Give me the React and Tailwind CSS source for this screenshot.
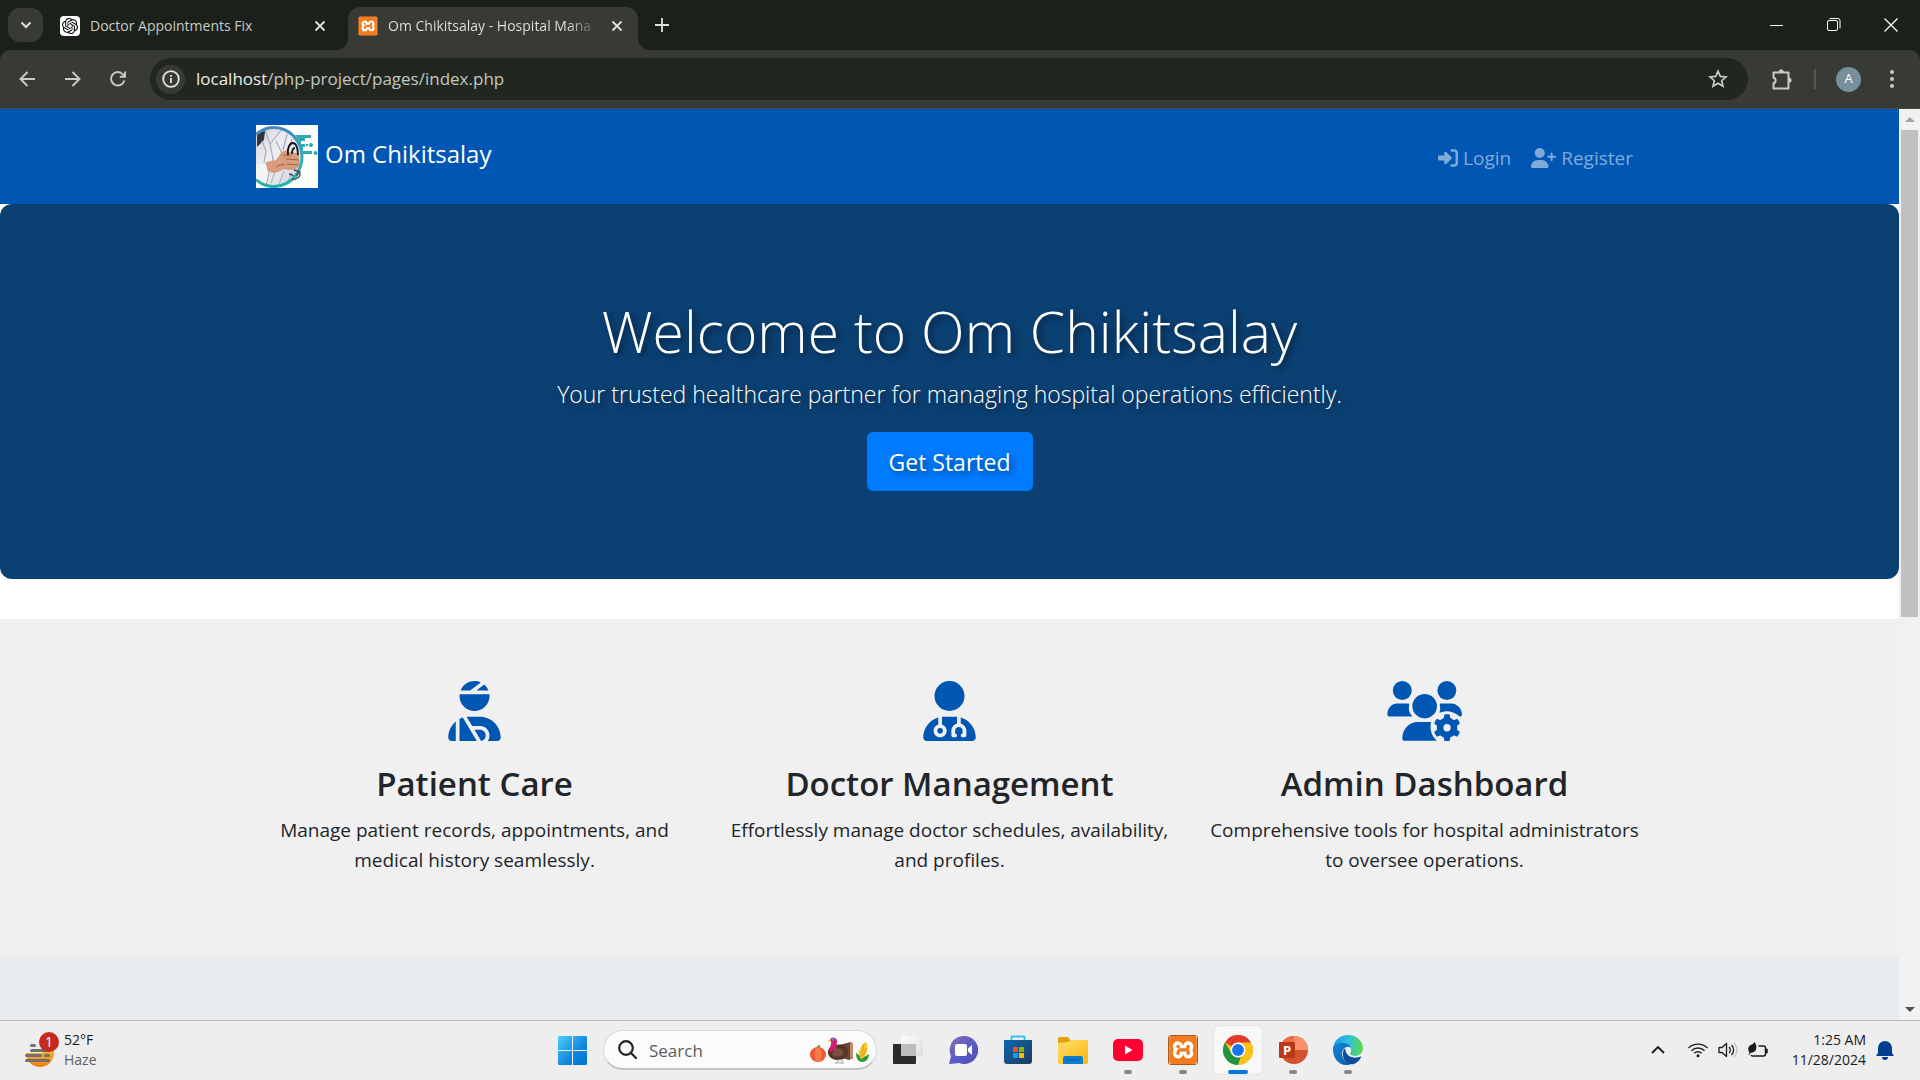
import React from "react";
import { FaUserInjured, FaUserDoctor, FaRightToBracket, FaUserPlus } from "react-icons/fa6";
import { SiOpenai, SiXampp } from "react-icons/si";

function BrandLogo() {
  return (
    <svg viewBox="0 0 62 63" className="h-[63px] w-[62px] shrink-0" aria-hidden="true">
      <defs>
        <linearGradient id="ring" x1="0" y1="0" x2="0" y2="1">
          <stop offset="0" stopColor="#4287c4" />
          <stop offset="0.6" stopColor="#2fb0b8" />
          <stop offset="1" stopColor="#22b2a4" />
        </linearGradient>
        <clipPath id="ringClip"><ellipse cx="18" cy="31.500" rx="27" ry="29" /></clipPath>
        <linearGradient id="coat" x1="0" y1="0" x2="1" y2="1">
          <stop offset="0" stopColor="#cfd1d8" />
          <stop offset="0.400" stopColor="#eeeef2" />
          <stop offset="0.700" stopColor="#e2e3e9" />
          <stop offset="1" stopColor="#c4c7d0" />
        </linearGradient>
      </defs>
      <rect width="62" height="63" fill="#fff" />
      <g clipPath="url(#ringClip)">
        <path d="M3 3h27l12 12 4 17-6 27-26 3L0 60V9z" fill="url(#coat)" />
        <path d="M3 3l6 3-1 9-7 7V10z" fill="#33353c" />
        <path d="M9 5l5 14 3 15-2 5M14 19L26 4M6 16l4 10-3 18M20 16l6 12M31 9l-4 16M36 14l-3 10" fill="none" stroke="#a9adb9" strokeWidth="1.200" />
        <path d="M19 46l-4 12M28 46l-5 13M36 48l-5 10" fill="none" stroke="#b4b8c3" strokeWidth="1.200" />
        <path d="M0 40l10-2 3 10-3 14H0z" fill="#f4f4f7" />
        <path d="M10 38l3 10-3 13" fill="none" stroke="#9ea3af" />
      </g>
      <path d="M0 9.500A28 30 0 0 1 46 31.500 28 30 0 0 1 0 54.500" fill="none" stroke="url(#ring)" strokeWidth="3" />
      <path d="M10 37l10-2 5-7c3-3 6-3 8-1l8 1c3 2 2 4 2 6 1 2 1 4 0 6-1 4-4 5-8 5-4 0-6-1-9 0-5 3-9 4-14 1z" fill="#d79d7d" />
      <path d="M27 30l8 1M30 34l13 1M31 39l12 1M20 42c3-2 6-3 9-2" stroke="#a2644a" strokeWidth="1" fill="none" />
      <path d="M32 30c-1-8 2-12 5-12s5 5 5 12M36 29c0-4 1-6 3-6" stroke="#16181c" strokeWidth="1.800" fill="none" />
      <path d="M38 45c4 1 7 2 6 5s-5 4-8 4M33 49c3 0 6 3 7 6M44 46l-6 8" stroke="#3c4248" strokeWidth="1.300" fill="none" />
      <circle cx="39" cy="52" r="2" fill="#26b8b0" />
      <path d="M39 10h16v3h-6v3h-4v3h4v3h-2v4h9v3h-9c-1-8-4-14-8-19z" fill="#2ea9b4" />
      <circle cx="55" cy="20" r="2" fill="#2ea9b4" /><circle cx="59.500" cy="28" r="2" fill="#2ea9b4" />
      <circle cx="51" cy="20" r="1.300" fill="#2ea9b4" />
    </svg>
  );
}

const line = { fill: "none", stroke: "currentColor", strokeLinecap: "round", strokeLinejoin: "round" };

function CloseIcon() {
  return (
    <svg viewBox="0 0 12 12" className="size-3" aria-hidden="true">
      <path d="M1.500 1.500l9 9M10.500 1.500l-9 9" fill="none" stroke="currentColor" strokeWidth="1.800" />
    </svg>
  );
}

function TabStrip() {
  return (
    <header className="flex h-[50px] items-end bg-[#1c201b] text-[#dfe1dc]">
      <button aria-label="Search tabs" className="mb-2 ml-2 flex h-[34px] w-[35px] items-center justify-center rounded-xl bg-[#383b35]">
        <svg viewBox="0 0 12 8" className="h-2 w-3"><path d="M1.500 1.500L6 6l4.500-4.500" fill="none" stroke="currentColor" strokeWidth="2" /></svg>
      </button>
      <div className="ml-[5px] flex h-[43px] w-[300px] items-center pr-[22px] pb-1.5 pl-3 text-sm">
        <span className="flex size-5 shrink-0 items-center justify-center rounded bg-white text-black"><SiOpenai className="size-4" /></span>
        <span className="ml-2.5 flex-1 truncate text-[#c9ccc4]">Doctor Appointments Fix</span>
        <button aria-label="Close tab" className="flex size-3 text-[#dfe1dc]"><CloseIcon /></button>
      </div>
      <div className="relative flex h-[43px] w-[290px] items-center rounded-t-xl bg-[#383b35] pr-[15px] pb-1.5 pl-2.5 text-sm">
        <svg viewBox="0 0 12 12" className="absolute bottom-0 -left-3 size-3"><path d="M12 0v12H0A12 12 0 0 0 12 0z" fill="#383b35" /></svg>
        <svg viewBox="0 0 12 12" className="absolute -right-3 bottom-0 size-3"><path d="M0 0v12h12A12 12 0 0 1 0 0z" fill="#383b35" /></svg>
        <XamppIcon className="size-5" />
        <span className="ml-2.5 flex-1 overflow-hidden bg-linear-to-r from-[#e3e5df] from-85% to-[#383b35] bg-clip-text whitespace-nowrap text-transparent">Om Chikitsalay - Hospital Mana</span>
        <button aria-label="Close tab" className="ml-3 flex size-3"><CloseIcon /></button>
      </div>
      <button aria-label="New tab" className="mb-[18px] ml-[17px]">
        <svg viewBox="0 0 14 14" className="size-3.5"><path d="M7 0v14M0 7h14" fill="none" stroke="currentColor" strokeWidth="1.800" /></svg>
      </button>
      <div className="ml-auto flex h-full items-center gap-[43px] pr-[22px] text-white">
        <button aria-label="Minimize"><svg viewBox="0 0 14 14" className="size-3.5"><path d="M0 7.500h13" stroke="currentColor" /></svg></button>
        <button aria-label="Restore">
          <svg viewBox="0 0 14 14" className="size-3.5" {...line}><rect x="0.500" y="2.500" width="10" height="10" rx="1.500" /><path d="M3 0.500h8a2 2 0 0 1 2 2V10" /></svg>
        </button>
        <button aria-label="Close window"><svg viewBox="0 0 14 14" className="size-3.5"><path d="M0.500 0.500l13 13M13.500 0.500l-13 13" stroke="currentColor" strokeWidth="1.200" /></svg></button>
      </div>
    </header>
  );
}

function Toolbar() {
  return (
    <div className="bg-[#1c201b]">
      <div className="flex h-[59px] items-center rounded-t-[10px] border-b border-[#4b4e48] bg-[#383b35] pr-[26px] pl-[19px] text-[#c9ccc2]">
        <button aria-label="Back"><svg viewBox="0 0 16 16" className="size-4" fill="none" stroke="currentColor" strokeWidth="1.900"><path d="M16 8H2M8.500 1L1.500 8l7 7" /></svg></button>
        <button aria-label="Forward" className="ml-[30px]"><svg viewBox="0 0 16 16" className="size-4" fill="none" stroke="currentColor" strokeWidth="1.900"><path d="M0 8h14M7.500 1l7 7-7 7" /></svg></button>
        <button aria-label="Reload" className="ml-[29px]">
          <svg viewBox="0 0 16 16" className="size-4" fill="none" stroke="currentColor" strokeWidth="1.900"><path d="M14.300 9.500A6.700 6.700 0 1 1 13 3.500L15 5.500M15 0.500v5.200H9.800" /></svg>
        </button>
        <div className="ml-6 flex h-[42px] flex-1 items-center rounded-full bg-[#222620] pr-5 pl-1.5">
          <button aria-label="Site information" className="flex size-[29px] items-center justify-center rounded-full bg-[#383b35]">
            <svg viewBox="0 0 18 18" className="size-[18px]" fill="none" stroke="#e3e5df" strokeWidth="1.800"><circle cx="9" cy="9" r="7.800" /><path d="M9 8v5M9 5v1.800" /></svg>
          </button>
          <label htmlFor="address" className="ml-[11px] text-[17px] leading-7 text-[#eceee8]">localhost</label>
          <input id="address" defaultValue="/php-project/pages/index.php" className="h-7 min-w-0 flex-1 bg-transparent text-[17px] leading-7 text-[#c3c6bd] outline-none" />
          <button aria-label="Bookmark this page">
            <svg viewBox="0 0 20 20" className="size-5" fill="none" stroke="currentColor" strokeWidth="1.700"><path d="M10 2.200l2.300 5.200 5.700.5-4.300 3.800 1.300 5.600-5-3-5 3 1.300-5.600L2 7.900l5.700-.5z" /></svg>
          </button>
        </div>
        <button aria-label="Extensions" className="ml-[23px]">
          <svg viewBox="0 0 22 22" className="size-[22px]" fill="none" stroke="currentColor" strokeWidth="2" strokeLinejoin="round">
            <path d="M2.500 4.500h15v16h-15v-5.200a2.900 2.900 0 0 0 0-5.600z" />
            <path d="M8 4a2.200 2.200 0 0 1 4.400 0zM18 10a2.200 2.200 0 0 1 0 4.400z" fill="currentColor" strokeWidth="1" />
          </svg>
        </button>
        <span className="ml-[21px] h-5 w-0.5 bg-[#54584f]" />
        <button aria-label="Profile" className="ml-5 flex size-[25px] items-center justify-center rounded-full bg-[#78909c] text-[13px] text-white">A</button>
        <button aria-label="Menu" className="ml-[29px]"><svg viewBox="0 0 4 18" className="h-[18px] w-1" fill="currentColor"><circle cx="2" cy="2" r="2" /><circle cx="2" cy="9" r="2" /><circle cx="2" cy="16" r="2" /></svg></button>
      </div>
    </div>
  );
}

function TeamGearIcon({ className }) {
  return (
    <svg viewBox="590 64 226 181" className={className} fill="currentColor" aria-hidden="true">
      <circle cx="636" cy="92.500" r="28.500" />
      <circle cx="770.500" cy="92.500" r="28.500" />
      <circle cx="703.500" cy="140" r="37" />
      <path d="M621 132h33c2 0 3 1 3 3-3 14 0 27 10 36h-70c-4 0-6-2-6-6 0-18 12-33 30-33z" />
      <path d="M752 132h31c18 0 33 15 33 33 0 3-1 5-3 6-3 1-5 0-7-2-17-14-36-18-58-9 3-8 3-16 1-25 0-2 1-3 3-3z" />
      <path d="M684 188h39c-5 19 0 41 17 56h-98c-4 0-6-3-6-6 0-28 20-50 48-50z" />
      <circle cx="771" cy="205" r="21" fill="none" stroke="currentColor" strokeWidth="20" />
      {[0, 60, 120, 180, 240, 300].map((angle) => (
        <path key={angle} d="M763 165q8-2 16 0l2 13h-20z" transform={`rotate(${angle} 771 205)`} />
      ))}
    </svg>
  );
}

const features = [
  { Icon: FaUserInjured, iconClass: "h-[60px] w-[53px]", title: "Patient Care", text: "Manage patient records, appointments, and medical history seamlessly." },
  { Icon: FaUserDoctor, iconClass: "h-[60px] w-[53px]", title: "Doctor Management", text: "Effortlessly manage doctor schedules, availability, and profiles." },
  { Icon: TeamGearIcon, iconClass: "h-[60px] w-[75px]", title: "Admin Dashboard", text: "Comprehensive tools for hospital administrators to oversee operations." },
];

function Site() {
  return (
    <main className="flex min-w-0 flex-1 flex-col overflow-hidden bg-white text-[#212529]">
      <nav className="bg-[#0056b3] py-4">
        <div className="mx-auto flex max-w-[1425px] items-center justify-between px-[19px]">
          <a href="#home" className="flex items-center gap-[7px] text-2xl leading-9 text-white">
            <BrandLogo />
            <span className="pb-1.5">Om Chikitsalay</span>
          </a>
          <div className="flex gap-5 px-2.5 pt-0.5 text-[19px] leading-[30px] text-[#80abd9]">
            <a href="#login" className="flex items-center gap-[5px]"><FaRightToBracket className="size-5" />Login</a>
            <a href="#register" className="flex items-center gap-[5px]"><FaUserPlus className="h-5 w-[25px]" />Register</a>
          </div>
        </div>
      </nav>
      <section className="flex flex-col items-center rounded-xl bg-[#0b4073] px-5 pt-[91px] pb-[88px] text-center text-white text-shadow-[3px_3px_6px_rgba(0,0,0,0.5)]">
        <h1 className="text-[57px] leading-[72px] font-light">Welcome to Om Chikitsalay</h1>
        <p className="mt-2.5 mb-5 text-[23px] leading-[35px] font-light">Your trusted healthcare partner for managing hospital operations efficiently.</p>
        <button className="h-[59px] rounded-md bg-[#007bff] px-[22px] pt-0.5 text-[23px] text-shadow-[3px_3px_6px_rgba(0,0,0,0.5)]">Get Started</button>
      </section>
      <section className="mt-10 bg-[#f0f0f0] pt-[62px] pb-[75px]">
        <div className="mx-auto grid max-w-[1425px] grid-cols-3">
          {features.map(({ Icon, iconClass, title, text }) => (
            <article key={title} className="flex flex-col items-center px-3 text-center">
              <Icon className={`${iconClass} text-[#0056b3]`} />
              <h3 className="mt-[22px] text-[33px] leading-[42px] font-semibold">{title}</h3>
              <p className="mt-2.5 mb-[7px] text-[19px] leading-[30px]">{text}</p>
            </article>
          ))}
        </div>
      </section>
      <footer className="flex-1 bg-[#e8ecef]" />
    </main>
  );
}

function Scrollbar() {
  return (
    <div aria-hidden="true" className="flex w-[21px] shrink-0 flex-col items-center bg-[#f1f1f1]">
      <span className="flex h-[21px] items-center"><svg viewBox="0 0 10 5" className="h-[5px] w-2.5"><path d="M0 5l5-5 5 5z" fill="#a3a3a3" /></svg></span>
      <div className="w-full flex-1 px-0.5"><div className="h-[56%] bg-[#c1c1c1]" /></div>
      <span className="flex h-[21px] items-center"><svg viewBox="0 0 10 5" className="h-[5px] w-2.5"><path d="M0 0l5 5 5-5z" fill="#505050" /></svg></span>
    </div>
  );
}

function XamppIcon({ className }) {
  return (
    <span className={`${className} flex shrink-0 overflow-hidden rounded-[3px] border border-[#a8571f] bg-white text-[#f47b20]`}>
      <SiXampp className="size-full" />
    </span>
  );
}

function WindowsIcon() {
  return (
    <svg viewBox="0 0 29 29" className="size-[29px]">
      <defs><linearGradient id="win" x1="0" y1="0" x2="1" y2="1"><stop offset="0" stopColor="#4cd0ff" /><stop offset="0.600" stopColor="#0f86dc" /><stop offset="1" stopColor="#0072cf" /></linearGradient></defs>
      <path d="M1 0h13v14H0V1zM15 0h13l1 1v13H15zM0 15h14v14H1l-1-1zM15 15h14v13l-1 1H15z" fill="url(#win)" />
    </svg>
  );
}

function TaskViewIcon() {
  return (
    <svg viewBox="0 0 30 28" className="h-7 w-[30px]">
      <defs><linearGradient id="tv" x1="0" y1="0" x2="1" y2="1"><stop offset="0" stopColor="#fff" /><stop offset="1" stopColor="#dcdcdc" /></linearGradient></defs>
      <rect y="8" width="23" height="20" rx="1" fill="#2b2b29" />
      <rect x="8" width="22" height="20" rx="1" fill="url(#tv)" />
      <path d="M8 8h15v12H8z" fill="#bdbdbd" />
    </svg>
  );
}

function ChatIcon() {
  return (
    <svg viewBox="0 0 29 28" className="h-7 w-[29px]">
      <defs><linearGradient id="chat" x1="0" y1="0" x2="1" y2="1"><stop offset="0" stopColor="#8d6bb3" /><stop offset="0.500" stopColor="#5a5fc7" /><stop offset="1" stopColor="#4c4bb8" /></linearGradient></defs>
      <path d="M15 0a14 14 0 1 1-5 27l-9 1c-1 0-1-1-.7-1.500L2 20A14 14 0 0 1 15 0z" fill="url(#chat)" />
      <rect x="6" y="8" width="12" height="12" rx="2" fill="#fff" /><path d="M19 12.500l4-3.500v10l-4-3.500z" fill="#fff" />
    </svg>
  );
}

function StoreIcon() {
  return (
    <svg viewBox="0 0 30 30" className="size-[30px]">
      <defs><linearGradient id="store" x1="0" y1="0" x2="1" y2="1"><stop offset="0" stopColor="#0a67b0" /><stop offset="1" stopColor="#243a5e" /></linearGradient></defs>
      <path d="M8.500 6V1.500h13V6" fill="none" stroke="#35c1f1" strokeWidth="1.800" strokeLinejoin="round" />
      <path d="M1 5h28v21a3 3 0 0 1-3 3H4a3 3 0 0 1-3-3z" fill="url(#store)" />
      <path d="M10 12h5v5h-5z" fill="#f25022" /><path d="M16 12h5v5h-5z" fill="#7fba00" /><path d="M10 18h5v5h-5z" fill="#00a4ef" /><path d="M16 18h5v5h-5z" fill="#ffb900" />
    </svg>
  );
}

function FolderIcon() {
  return (
    <svg viewBox="0 0 30 27" className="h-[27px] w-[30px]">
      <defs><linearGradient id="folder" x1="0" y1="0" x2="1" y2="1"><stop offset="0" stopColor="#ffdc6b" /><stop offset="1" stopColor="#fbb90f" /></linearGradient></defs>
      <path d="M1 0h9l3 4v6H0V1z" fill="#dfa10c" />
      <path d="M10 5l3-2h16l1 1v22l-1 1H1l-1-1V6z" fill="url(#folder)" />
      <path d="M5 27v-6a2 2 0 0 1 2-2h16a2 2 0 0 1 2 2v6z" fill="#0f7bd0" /><path d="M9 23h12" stroke="#0a4f93" />
    </svg>
  );
}

function YouTubeIcon() {
  return <svg viewBox="0 0 30 22" className="h-[22px] w-[30px]"><rect width="30" height="22" rx="5" fill="#ff0033" /><path d="M12 6.500v9l7.500-4.500z" fill="#fff" /></svg>;
}

function ChromeIcon() {
  return (
    <svg viewBox="0 0 48 48" className="size-[30px]">
      <circle cx="24" cy="24" r="24" fill="#fbc116" />
      <path d="M24 24L3.200 12A24 24 0 0 1 44.800 12z" fill="#e33b2e" />
      <path d="M24 12h20.800A24 24 0 0 1 24 48l10.400-18z" fill="#fbc116" />
      <path d="M3.200 12L13.600 30 24 36l5-1L24 48A24 24 0 0 1 3.200 12z" fill="#229342" />
      <path d="M29 34.500L24 48l10.400-18z" fill="#fbc116" />
      <circle cx="24" cy="24" r="12" fill="#fff" /><circle cx="24" cy="24" r="9.500" fill="#1a73e8" />
    </svg>
  );
}

function PowerPointIcon() {
  return (
    <svg viewBox="0 0 30 30" className="size-[30px]">
      <circle cx="16" cy="15" r="14" fill="#d35230" /><path d="M16 1a14 14 0 0 1 14 14H16z" fill="#ff8f6b" /><path d="M2 15A14 14 0 0 1 16 1v14z" fill="#ed6c47" />
      <rect x="1" y="7" width="16" height="16" rx="1" fill="#b7381b" />
      <text x="9" y="20" textAnchor="middle" fontSize="13" fontWeight="700" fill="#fff">P</text>
    </svg>
  );
}

function EdgeIcon() {
  return (
    <svg viewBox="0 0 30 30" className="size-[30px]">
      <defs>
        <linearGradient id="edgeTop" x1="0" y1="0.300" x2="1" y2="0.400"><stop offset="0" stopColor="#1b9de2" /><stop offset="0.500" stopColor="#2fc0e0" /><stop offset="1" stopColor="#5fd84b" /></linearGradient>
        <linearGradient id="edgeLow" x1="0" y1="0" x2="1" y2="1"><stop offset="0" stopColor="#1488d8" /><stop offset="1" stopColor="#0a5bab" /></linearGradient>
      </defs>
      <path d="M0 15C0 6 7 0 15 0c9 0 15 6.500 15 13 0 5-4 8-8 8-3 0-5-1-5-2s1-2 1-4c0-3-3-5-6-5C6 10 1 13 0 15z" fill="url(#edgeTop)" />
      <path d="M0 15c0-4 4-8 10-7 4 0 7 2 8 5-3-3-9 0-9 6 0 5 4 9 9 10-9 4-18-4-18-14z" fill="url(#edgeLow)" />
      <path d="M12.500 13C9 15 9 22 12 26c3 4 8 4 11 2s5-5 5-6c0-1-1 0-2 0-6 2-14-1-13.500-9z" fill="#0c4e9b" />
      <path d="M12.500 13c2-2 5-1 5.500 1 .5 2-1 4-1 5 0 1 2 2 5 2l4 .5c-7 2.500-14-1.500-13.500-8.500z" fill="#eee" />
    </svg>
  );
}

function HolidayArt() {
  return (
    <svg viewBox="0 0 60 28" className="h-7 w-[60px]" aria-hidden="true">
      <ellipse cx="8" cy="18.500" rx="8" ry="7.500" fill="#ee5a2e" /><ellipse cx="8" cy="18.500" rx="3.500" ry="7.500" fill="#fb7a4c" /><path d="M8 12c0-1 1-2 2-2" stroke="#5f9a2f" strokeWidth="2" fill="none" />
      <path d="M29 9l12-3 2 2v14l-4 2-10-3z" fill="#6b4535" /><path d="M40 7h3v14l-3 2z" fill="#c48a65" />
      <path d="M18 17c-1-6 7-10 15-8 5 2 7 8 3 12-5 5-17 4-18-4z" fill="#573525" /><path d="M24 13c5-2 11 1 9 5-2 3-8 4-11 1" fill="#7a5140" />
      <path d="M20 4c1-4 7-3 7 1 0 3-1 5-1 8l-6 3c-2-3 2-7 1-11z" fill="#d81b75" /><path d="M21 3l-3 1.500L21 6z" fill="#f0a028" /><circle cx="23" cy="3.500" r="1.200" fill="#3aa0d8" />
      <path d="M28 23v4h-3M32 23v4h-3M32 27h2" stroke="#a3989c" strokeWidth="1" fill="none" />
      <path d="M56 6c3 4 1 13-3 17l-5-1c0-7 4-15 8-16z" fill="#f9c62b" /><path d="M54 8l-3 13M56 12l-3 8" stroke="#e09c12" fill="none" />
      <path d="M46 17c2 1 4 3 5 6l8-5c0 5-3 8-7 8-4 0-6-4-6-9z" fill="#2f9a3c" />
    </svg>
  );
}

function WeatherIcon() {
  return (
    <svg viewBox="0 0 36 36" className="size-9 shrink-0" aria-hidden="true">
      <defs><linearGradient id="sun" x1="0" y1="0" x2="0" y2="1"><stop offset="0" stopColor="#f7c331" /><stop offset="1" stopColor="#f07d1a" /></linearGradient></defs>
      <path d="M1 21h28a14 14 0 0 1-28 0zM17 21a7 7 0 0 1 12-4v6z" fill="url(#sun)" />
      <path d="M6.500 13.500h3M6.500 18.500h17M1.500 23.500h14M20.500 23.500h3M1.500 28.500h22" stroke="#6f7072" strokeWidth="3" strokeLinecap="round" />
      <circle cx="24" cy="10" r="10" fill="#c42b1c" />
      <text x="24" y="15" textAnchor="middle" fontSize="14" fill="#fff">1</text>
    </svg>
  );
}

const apps = [
  { name: "Task View", Icon: TaskViewIcon },
  { name: "Chat", Icon: ChatIcon },
  { name: "Microsoft Store", Icon: StoreIcon },
  { name: "File Explorer", Icon: FolderIcon },
  { name: "YouTube", Icon: YouTubeIcon, open: true },
  { name: "XAMPP", Icon: () => <XamppIcon className="size-[30px]" />, open: true },
  { name: "Chrome", Icon: ChromeIcon, active: true },
  { name: "PowerPoint", Icon: PowerPointIcon, open: true },
  { name: "Edge", Icon: EdgeIcon, open: true },
];

function Taskbar() {
  return (
    <footer className="grid h-[60px] grid-cols-[1fr_auto_1fr] items-center border-t border-[#b9b9bb] bg-[#eee] pb-px text-[#1b1b1b]">
      <button className="flex items-center gap-[3px] justify-self-start pl-[25px] text-left text-sm leading-5">
        <WeatherIcon />
        <span>52°F<br /><span className="text-[#5f5f5f]">Haze</span></span>
      </button>
      <div className="flex items-center gap-[7px]">
        <button aria-label="Start" className="flex size-12 items-center justify-center"><WindowsIcon /></button>
        <label className="flex h-10 w-[274px] items-center rounded-full border border-b-2 border-[#dadada] border-b-[#c4c4c4] bg-[#fbfbfb] pr-1.5 pl-3.5">
          <svg viewBox="0 0 19 19" className="size-[19px] shrink-0" fill="none" stroke="#222" strokeWidth="2.200"><circle cx="8" cy="8" r="6.800" /><path d="M13 13l5 5" strokeLinecap="round" /></svg>
          <input aria-label="Search" placeholder="Search" className="ml-3 w-0 flex-1 bg-transparent pt-0.5 text-[17px] outline-none placeholder:text-[#5c5c5c]" />
          <HolidayArt />
        </label>
        {apps.map(({ name, Icon, open, active }) => (
          <button key={name} aria-label={name} className={`relative flex size-12 items-center justify-center rounded-md ${active ? "bg-[#f8f8f8] shadow-[0_0_1px_1px_#e4e4e4]" : ""}`}>
            <Icon />
            {open && <span className="absolute bottom-0 h-1 w-2 rounded-full bg-[#868686]" />}
            {active && <span className="absolute bottom-0 h-1 w-5 rounded-full bg-[#0078d4]" />}
          </button>
        ))}
      </div>
      <div className="flex items-center justify-self-end pr-[26px]">
        <button aria-label="Show hidden icons"><svg viewBox="0 0 14 8" className="h-2 w-3.5"><path d="M1 7l6-6 6 6" fill="none" stroke="currentColor" strokeWidth="1.800" /></svg></button>
        <button aria-label="Network, sound and battery" className="ml-[23px] flex items-center gap-2.5">
          <svg viewBox="0 0 20 16" className="h-4 w-5" fill="none" stroke="currentColor" strokeWidth="1.400"><path d="M.5 6a13.500 13.500 0 0 1 19 0M3.500 8.700a9.300 9.300 0 0 1 13 0M6.300 11.300a5.300 5.300 0 0 1 7.400 0" /><circle cx="10" cy="13.800" r="1.500" fill="currentColor" stroke="none" /></svg>
          <svg viewBox="0 0 20 16" className="h-4 w-5" fill="none" stroke="currentColor" strokeWidth="1.300" strokeLinejoin="round"><path d="M1 5.500h3l4.500-4v13L4 10.500H1zM11 5a4 4 0 0 1 0 6M13.500 3a7 7 0 0 1 0 10" /><path d="M16 1a10 10 0 0 1 0 14" stroke="#c2c2c2" /></svg>
          <svg viewBox="0 0 20 18" className="h-[18px] w-5" fill="none" stroke="currentColor" strokeWidth="1.500">
            <path d="M10.500 5h5a2 2 0 0 1 2 2v6a2 2 0 0 1-2 2H4.500a2 2 0 0 1-1.500-1" />
            <path d="M18 8h1.500v4H18z" fill="currentColor" strokeWidth="0.500" />
            <path d="M6.500 1c2.500 3 2.500 7.500 0 9.500-1.500 1.200-3 1-4 1.500L1 14l-.5-.5 1-2C-.5 8.500 0 6 2 4.500c1.500-1 3.500-1.500 4.500-3.500z" fill="currentColor" stroke="none" />
          </svg>
        </button>
        <button className="ml-6 text-right text-sm leading-5">1:25 AM<br />11/28/2024</button>
        <button aria-label="Notifications" className="ml-2.5">
          <svg viewBox="0 0 18 20" className="h-5 w-[18px]" fill="#003e92"><path d="M9 1a7 7 0 0 1 7 7v5l1.500 2v1H.5v-1L2 13V8a7 7 0 0 1 7-7zM6 17h6a3 3 0 0 1-6 0z" /></svg>
        </button>
      </div>
    </footer>
  );
}

export default function App() {
  return (
    <div className="flex h-screen flex-col overflow-hidden font-['Open_Sans','Noto_Sans',sans-serif]">
      <TabStrip />
      <Toolbar />
      <div className="flex min-h-0 flex-1">
        <Site />
        <Scrollbar />
      </div>
      <Taskbar />
    </div>
  );
}
